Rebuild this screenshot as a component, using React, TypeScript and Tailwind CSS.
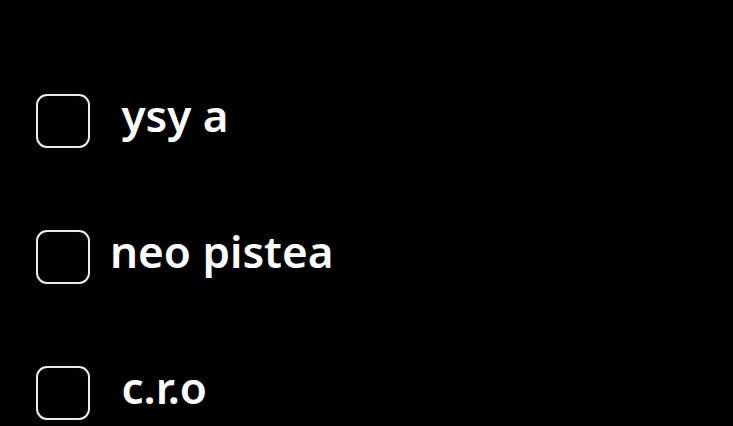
const items = [' ysy a', 'neo pistea', ' c.r.o'];

export default function App() {
  return (
    <div className="h-[426px] w-[733px] overflow-hidden bg-black pl-[36px] pt-[94px]">
      <div className="flex flex-col gap-[82px]">
        {items.map((label) => (
          <label key={label} className="flex h-[54px] items-center gap-[20px]">
            <span className="h-[54px] w-[54px] shrink-0 rounded-[11px] border-2 border-[#ececec]" />
            <span
              className="-translate-y-[6px] whitespace-pre text-[44px] font-semibold leading-none text-white"
              style={{ fontFamily: '"Noto Sans", "Open Sans", sans-serif' }}
            >
              {label}
            </span>
          </label>
        ))}
      </div>
    </div>
  );
}
